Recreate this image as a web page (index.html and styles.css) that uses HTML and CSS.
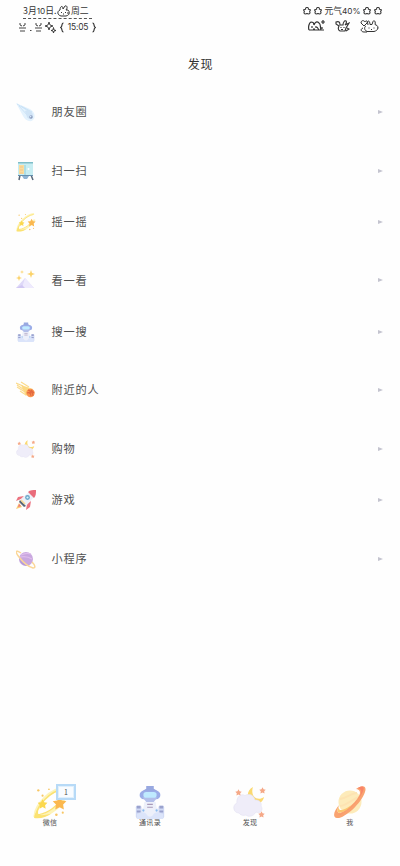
FILE: index.html
```html
<!DOCTYPE html>
<html lang="zh-CN">
<head>
<meta charset="utf-8">
<title>发现</title>
<link rel="stylesheet" href="styles.css">
</head>
<body>
<svg class="defs" aria-hidden="true">
  <symbol id="flower" viewBox="0 0 10 10"><path d="M5 1.5C6 1.2 6.5 2 6.4 3.2 8.5 3 9 4.2 7.6 5.3 8.7 7.5 7.5 8.6 5 7.6 2.5 8.6 1.3 7.5 2.4 5.3 1 4.2 1.5 3 3.6 3.2 3.5 2 4 1.2 5 1.5Z" fill="none" stroke="#333" stroke-width="1.1" stroke-linejoin="round"/></symbol>
  <symbol id="star" viewBox="0 0 10 10"><path d="M5 0.5 6.5 3.3 9.6 3.8 7.4 6 7.9 9.3 5 7.8 2.1 9.3 2.6 6 .4 3.8 3.5 3.3Z"/></symbol>
  <symbol id="comet" viewBox="0 0 32 32">
    <path d="M29 3C17 4 3 18 2 29c9 2 22-6 28-17" fill="none" stroke="#fdf3b8" stroke-width="3"/>
    <path d="M28 4C16 6 4 19 3 28c8 0 18-6 23-14" fill="none" stroke="#fbe272" stroke-width="1.3"/>
    <path d="M5 22C3 25 1 28 1 31c6 1 12-1 16-4-5 1-9 2-11 1-2-1-1-3-1-6Z" fill="#fbe272"/>
    <use href="#star" x="4" y="13" width="10" height="10" fill="#fbd84f"/>
    <use href="#star" x="18" y="10" width="14" height="14" fill="#fbb84e"/>
    <g fill="#f8c663"><circle cx="5" cy="5" r="1.1"/><circle cx="9" cy="10" r="1"/><circle cx="15" cy="4" r=".8"/><circle cx="22" cy="28" r="1.2"/><circle cx="28" cy="26" r="1"/></g>
  </symbol>
  <symbol id="astro" viewBox="0 0 32 36">
    <path d="M12 4V1h8v3l5 3H7Z" fill="#98a8e0"/>
    <rect x="5" y="6" width="22" height="9" rx="4.5" fill="#9badE8"/>
    <path d="M8 13h16l-4 5h-8Z" fill="#b3bfea"/>
    <rect x="9" y="7.5" width="14" height="6" rx="3" fill="#bfeaff"/>
    <path d="M10 18h12l1 6 3 2v9H6v-9l3-2Z" fill="#edf0fa"/>
    <path d="M13 20.5h6M13 23.5h6" stroke="#a99ab9" stroke-width="1.2"/>
    <rect x="1" y="22" width="6" height="13" rx="1.5" fill="#d0d9f4"/><rect x="25" y="22" width="6" height="13" rx="1.5" fill="#d0d9f4"/>
    <path d="M2 22h4v3H2ZM26 22h4v3h-4ZM2 27h4v2H2ZM26 27h4v2h-4Z" fill="#9aa2cd"/>
    <path d="M2 31c5-3 9-3 11 1 1 2 5 2 6 0 2-4 6-4 11-1v5H2Z" fill="#dbe4fa"/>
    <circle cx="9" cy="27" r="1.2" fill="#8bbcf0"/><circle cx="23" cy="27" r="1.2" fill="#8bbcf0"/>
  </symbol>
  <symbol id="moon" viewBox="0 0 34 32">
    <path d="M20 1C14 4 13 12 18 16c5 4 12 1 13-5-4 3-9 2-11-2-1-3-1-5 0-8Z" fill="#fbd970"/>
    <path d="M6 27C0 27-1 19 4 17 3 11 8 7 12 9.500 16 7 21 9 22 14c5 0 7 3 6 6 3 4-1 8-5 6-3 5-8 5-10 3-3 1-6 0-7-2Z" fill="#efedf9" stroke="#e3e0f1" stroke-width=".6"/>
    <g fill="#f5a887"><use href="#star" x="2" y="3" width="7" height="7"/><use href="#star" x="26" y="1" width="7" height="7"/><use href="#star" x="25" y="25" width="7" height="7"/></g>
  </symbol>
</svg>

<header class="status">
  <div class="status-left">
    <div class="date"><span class="date-day">3月<span class="num">10</span>日.</span>
      <svg class="bunny" viewBox="0 0 13 12"><path d="M3 5C0 6 0 10 4 11h5c4-1 4-4 2-6L9 5c2-2 1-5-1-4L6 4C6 0 3 1 3 5Z" fill="#fff" stroke="#333"/><path d="M4 7.500h1M8 7.500h1M6 9h1M10 8h2" stroke="#333"/></svg>
      <span>周二</span></div>
    <div class="clock">
      <svg class="faces" viewBox="0 0 23 10"><path d="M1 1v2l2 1M6 1v2L4 4M0 6h7M1 9h5M17 1v2l2 1M22 1v2l-2 1M16 6h7M17 9h5M11 8.5h1.5" fill="none" stroke="#444"/></svg>
      <svg class="sparkles" viewBox="0 0 11 11"><path d="M4 0 5 3 8 4 5 5 4 8 3 5 0 4 3 3ZM8.5 5.500 9 8l2 .5L9 9l-.5 2L8 9l-2-.5L8 8Z" fill="#fff" stroke="#333" stroke-width=".9"/></svg>
      <svg class="brace" viewBox="0 0 4 11"><path d="M3.5 1C1 1 3 4 .7 5.500 3 7 1 10 3.500 10" fill="none" stroke="#333" stroke-width="1.2"/></svg>
      <span class="time">15:05</span>
      <svg class="brace flip" viewBox="0 0 4 11"><path d="M3.5 1C1 1 3 4 .7 5.500 3 7 1 10 3.500 10" fill="none" stroke="#333" stroke-width="1.2"/></svg>
    </div>
  </div>
  <div class="status-right">
    <div class="battery"><svg><use href="#flower"/></svg><svg><use href="#flower"/></svg><span class="charge">元气<span class="num">40%</span></span><svg><use href="#flower"/></svg><svg><use href="#flower"/></svg></div>
    <div class="pets">
      <svg class="pet-a" viewBox="0 0 17 12"><path d="M1 10C0 7 1 3 3 2c2 0 3 1 3 3 1-3 3-4 5-2 2 1 1 4 2 7M1 10h15M4 6v2M8 6v2M5 9h2M11 10 9 7M14 7v2M15 0v4M13 2h4" fill="none" stroke="#333" stroke-width="1.2"/></svg>
      <svg class="pet-b" viewBox="0 0 15 12"><path d="M1 2c3-1 4 0 4 3h3c0-3 2-5 3-4s0 3-1 4l4-2-3 5-1 3H5C3 10 3 8 4 6L1 4ZM6 7v1M9 7v1M6 9.500h2M12 8l2 1-3 2" fill="none" stroke="#333" stroke-width="1.1"/></svg>
      <svg class="pet-c" viewBox="0 0 19 13"><path d="M6 6C4 7 4 10 7 11.500h7c4-1 5-4 3-6l-2-1c1-3-1-5-2-3l-1 3h-2C10 1 8 0 7.500 2L8 5M4 6 1 3c0-3 3-3 4-1 1-2 3-1 2 1ZM3 8c-3 1-2 4 1 4h3M9 7.500v1M14 7.500v1M11 9.500h1M17 8h1" fill="none" stroke="#333"/></svg>
    </div>
  </div>
</header>

<h1 class="title">发现</h1>

<main class="list">
  <section class="group">
    <a class="row"><svg class="icon" viewBox="0 0 20 20"><path d="M0 1 14 7c5 3 6 8 3 11s-8 0-10-4Z" fill="#e4f2fd"/><path d="m1 2 13 8M3 4l9 10M5 4l11 6" stroke="#c5dff5" stroke-width=".8"/><path d="M9 9c4-2 8 1 8 5s-4 4-6 1Z" fill="#d0e4f6"/><circle cx="15" cy="15" r="1.700" fill="#8d9cbd"/><circle cx="14.6" cy="14.6" r=".8" fill="#d5e8fb"/></svg><span>朋友圈</span><i class="arrow"></i></a>
  </section>
  <section class="group">
    <a class="row"><svg class="icon" viewBox="0 0 20 20"><path d="m4 14-1 5M15 14l2 5" stroke="#58697b" stroke-width="1.5"/><path d="M6 15h7l-2 3H8Z" fill="#8eb4d4"/><path d="M2 1h15v14H2Z" fill="#c7edf2"/><path d="M2 1h15v1.500H2Z" fill="#7ebdc8"/><path d="M3 4h5v9H3Z" fill="#fbdc9c"/><path d="M4 6h3M4 9h3M4 12h3" stroke="#f3c68b"/><path d="M9 4v10" stroke="#92ced8"/><circle cx="12.5" cy="8" r="1" fill="#fff"/><path d="M2 14.500h15" stroke="#668fae"/></svg><span>扫一扫</span><i class="arrow"></i></a>
    <a class="row"><svg class="icon"><use href="#comet"/></svg><span>摇一摇</span><i class="arrow"></i></a>
  </section>
  <section class="group">
    <a class="row"><svg class="icon" viewBox="0 0 20 20"><path d="M0 18 9 8l9 10Z" fill="#ded8f8"/><path d="m9 8 9 10H6Z" fill="#eeeafd"/><path d="m0 18 6-3 3 3Z" fill="#d1c7f3"/><path d="m15 0 1 3 3 1-3 1-1 3-1-3-3-1 3-1ZM3 5l.8 2.200L6 8l-2.200.8L3 11l-.8-2.200L0 8l2.200-.8ZM6 0l.4 1.600L8 2l-1.600.4L6 4l-.4-1.600L4 2l1.600-.4Z" fill="#fbd269"/></svg><span>看一看</span><i class="arrow"></i></a>
    <a class="row"><svg class="icon"><use href="#astro"/></svg><span>搜一搜</span><i class="arrow"></i></a>
  </section>
  <section class="group">
    <a class="row"><svg class="icon" viewBox="0 0 20 20"><path d="m0 3 7 3M1 7l8 5M5 2l8 5M4 11l6 4M1 5l9 6" stroke="#fbdb8c" stroke-width="1.2"/><path d="m5 5 12 4-7 7Z" fill="#fcd881"/><circle cx="14.500" cy="13" r="4.200" fill="#fa9650"/><path d="M12 10c3 1 5 3 5 6M11 13c2-1 4 0 4 3M15 10l3 3" stroke="#e2683f" fill="none" stroke-width="1.200"/><circle cx="14.500" cy="12.500" r="1.200" fill="#e66940"/></svg><span>附近的人</span><i class="arrow"></i></a>
  </section>
  <section class="group">
    <a class="row"><svg class="icon"><use href="#moon"/></svg><span>购物</span><i class="arrow"></i></a>
    <a class="row"><svg class="icon" viewBox="0 0 20 20"><path d="m5 9-5 2 2-4 6-1ZM11 14l-1 6 4-3 1-6Z" fill="#ec7380"/><path d="M4 10 13 2l5 5-8 9c-3 0-6-3-6-6Z" fill="#edf0f8"/><path d="M12 2c2-2 5-2 8-2 0 3 0 6-2 8Z" fill="#e96c7b"/><circle cx="11.5" cy="7.5" r="2.400" fill="#6aa6c8"/><circle cx="11.5" cy="7.5" r="1.100" fill="#d5f2fc"/><path d="m4 10 6 6-2 1-5-5Z" fill="#596779"/><path d="m5 10 4 4" stroke="#fadc91" stroke-width="1.500"/><path d="m3 13-3 6 6-2Z" fill="#fbc875"/><path d="m3 14-1 3 3-1Z" fill="#ed777a"/></svg><span>游戏</span><i class="arrow"></i></a>
  </section>
  <section class="group">
    <a class="row"><svg class="icon" viewBox="0 0 20 20"><circle cx="10" cy="10" r="7" fill="#c9a8df"/><path d="M5 6c4-2 7-2 10-1M4 8c5-1 9 0 12 2" stroke="#dfbdec" stroke-width="1.200" fill="none"/><path d="M3 9c2 4 6 7 11 7-4 2-10 0-11-7Z" fill="#b29bd9"/><path d="M5 4C-1 0-1 3 3 8c4 5 10 10 14 11 3 0 2-3-1-6" fill="none" stroke="#fbd697" stroke-width="1.500"/></svg><span>小程序</span><i class="arrow"></i></a>
  </section>
</main>

<nav class="tabs">
  <a class="tab"><svg class="tab-icon"><use href="#comet"/></svg><b class="badge">1</b><span>微信</span></a>
  <a class="tab"><svg class="tab-icon"><use href="#astro"/></svg><span>通讯录</span></a>
  <a class="tab"><svg class="tab-icon"><use href="#moon"/></svg><span>发现</span></a>
  <a class="tab"><svg class="tab-icon" viewBox="0 0 34 34"><circle cx="17" cy="17" r="11.500" fill="#fdebba"/><path d="M7 14c7-1 11-6 17-6M7 21c8-1 13-8 20-9" stroke="#fde3b2" stroke-width="2" fill="none"/><path d="M23 4C30-1 34 1 32 7 28 19 11 34 4 33-1 32 1 26 6 20c-2 5-2 7 0 8C12 27 26 15 27 8c0-3-2-4-4-4Z" fill="#f9a370"/><path d="M25 3c5-3 7-1 5 3C26 16 11 30 5 30 14 28 26 16 28 8c1-3-1-4-3-5Z" fill="#fa8467"/><path d="M6 20c-2 5-2 7 0 8 5-1 9-4 13-8-5 3-9 5-11 5-2 0-3-2-2-5Z" fill="#fbc76f"/></svg><span>我</span></a>
</nav>
</body>
</html>
```
FILE: styles.css
```css
* { box-sizing: border-box; }
body {
  margin: 0;
  height: 866px;
  display: flex;
  flex-direction: column;
  background: #fefefe;
  color: #505050;
  font-family: "Noto Sans CJK SC", sans-serif;
  overflow: hidden;
}
svg { display: block; flex: none; }
.defs { position: absolute; width: 0; height: 0; }

.status {
  height: 40px;
  padding: 4px 17px 0 19px;
  display: flex;
  justify-content: space-between;
  color: #333;
  font-size: 8.8px;
  line-height: 12px;
}
.status-left { width: 80px; }
.num { font-family: Inter, sans-serif; font-size: 8.2px; }
.date {
  display: flex;
  align-items: center;
  width: 69px;
  height: 15px;
  margin-left: 4px;
  border-bottom: 1px dashed #555;
  white-space: nowrap;
}
.date-day { width: 34px; }
.bunny { width: 13px; height: 12px; margin-right: 1px; }
.clock { display: flex; align-items: center; height: 16px; }
.faces { width: 23px; height: 10px; margin-right: 3px; }
.sparkles { width: 11px; height: 11px; margin-right: 4px; }
.brace { width: 4px; height: 11px; }
.flip { transform: scaleX(-1); }
.time { width: 28px; text-align: center; font: 8.5px/12px Inter, sans-serif; letter-spacing: -0.2px; }
.status-right { width: 81px; }
.battery { display: flex; align-items: center; gap: 1px; height: 13px; white-space: nowrap; }
.battery svg { width: 10px; height: 10px; }
.charge { width: 37px; display: flex; justify-content: center; }
.pets { display: flex; align-items: center; height: 18px; padding-left: 6px; }
.pet-a { width: 17px; height: 12px; margin-right: 10px; }
.pet-b { width: 15px; height: 12px; margin-right: 10px; }
.pet-c { width: 19px; height: 13px; }

.title {
  margin: 0;
  height: 46.4px;
  padding-left: 1px;
  text-align: center;
  font-size: 12px;
  font-weight: 400;
  line-height: 48px;
  letter-spacing: 0.8px;
  color: #333;
}
.list { display: flex; flex-direction: column; gap: 7.5px; }
.row {
  display: flex;
  align-items: center;
  height: 51.15px;
  padding: 0 17px 0 15.5px;
  font-size: 11.2px;
  letter-spacing: 0.8px;
}
.row span { padding-bottom: 1.5px; }
.icon { width: 20px; height: 20px; margin-right: 16px; }
.arrow {
  margin-left: auto;
  border-left: 5px solid #c4c4cf;
  border-top: 2.5px solid transparent;
  border-bottom: 2.5px solid transparent;
}

.tabs { display: flex; margin-top: auto; height: 81px; }
.tab {
  position: relative;
  flex: 1;
  display: flex;
  flex-direction: column;
  align-items: center;
  font-size: 7px;
  line-height: 8px;
}
.tab-icon { width: 34px; height: 34px; }
.tab span { margin-top: -1px; letter-spacing: 0.3px; }
.badge {
  position: absolute;
  left: 56px;
  top: -1px;
  width: 20px;
  height: 16px;
  border: 2px solid #b7daf7;
  outline: 1px solid #e1f0fc;
  outline-offset: -3px;
  background: #f9fcff;
  font-size: 7px;
  font-weight: 400;
  line-height: 12px;
  text-align: center;
}
```
